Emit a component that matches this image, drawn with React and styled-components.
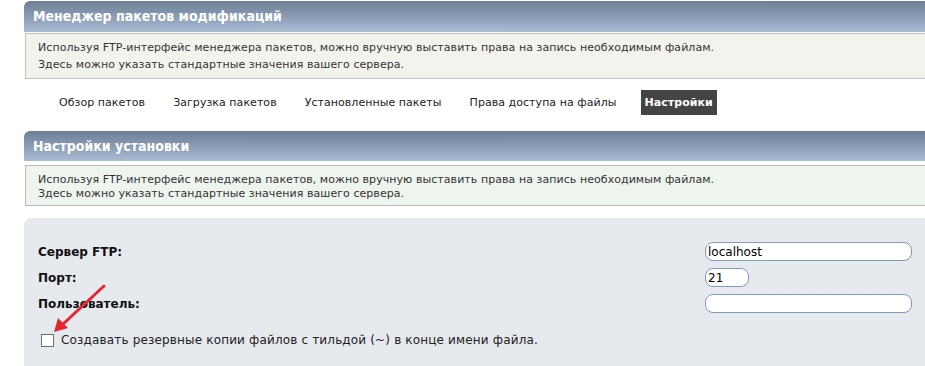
import React from "react";
import styled, { createGlobalStyle } from "styled-components";

const Global = createGlobalStyle`
  html, body { margin: 0; padding: 0; overflow: hidden; background: #fff; }
  body { font-family: "DejaVu Sans", Verdana, sans-serif; color: #222; }
`;

const Page = styled.div`
  position: relative;
  width: 1000px;
  padding: 1px 0 0 24px;
  height: 365px;
  overflow: hidden;
`;

const Header = styled.h2`
  margin: ${(p) => p.$top || 0}px 0 0 0;
  height: ${(p) => p.$h}px;
  line-height: ${(p) => p.$h}px;
  padding: 0 0 0 9px;
  border-radius: 6px 6px 0 0;
  background: linear-gradient(to bottom, #6c7f96 0%, #8a9cb3 50%, #aabdd5 100%);
  color: #fff;
  font-family: "DejaVu Sans Condensed", "DejaVu Sans", Verdana, sans-serif;
  font-size: 14px;
  font-weight: bold;
`;

const InfoBox = styled.div`
  margin: ${(p) => p.$top}px 0 0 1px;
  border: 1px solid ${(p) => p.$border};
  background: ${(p) => p.$bg};
  padding: ${(p) => p.$pad};
  font-size: 11px;
  letter-spacing: 0.06px;
  line-height: ${(p) => p.$lh}px;
  color: #333;
`;

const Tabs = styled.nav`
  display: flex;
  gap: 20px;
  margin: 11px 0 0 31px;
`;

const Tab = styled.span`
  display: block;
  height: 25px;
  line-height: 25px;
  padding: 0 4px;
  font-size: 11px;
  letter-spacing: 0.05px;
  color: ${(p) => (p.$active ? "#fff" : "#222")};
  background: ${(p) => (p.$active ? "#444444" : "transparent")};
  font-weight: ${(p) => (p.$active ? "bold" : "normal")};
`;

const Panel = styled.div`
  margin-top: 12px;
  background: #e6e9ee;
  border-radius: 7px 0 0 0;
  padding: 24px 0 30px 14px;
`;

const FormGrid = styled.div`
  display: grid;
  grid-template-columns: 667px auto;
  row-gap: 7px;
  align-items: center;
`;

const Label = styled.label`
  font-size: 12px;
  font-weight: bold;
  color: #111;
`;

const Input = styled.input`
  box-sizing: border-box;
  width: ${(p) => p.$w}px;
  height: 19px;
  padding: 0 2px;
  border: 1px solid #7f9cba;
  border-radius: 8px;
  background: #fff;
  font-family: "DejaVu Sans", Verdana, sans-serif;
  font-size: 12px;
  color: #000;
  outline: none;
`;

const CheckRow = styled.div`
  display: flex;
  align-items: center;
  gap: 7px;
  margin: 20px 0 0 3px;
  font-size: 12px;
  letter-spacing: 0.16px;
  color: #222;
`;

const Box = styled.span`
  display: block;
  box-sizing: border-box;
  width: 13px;
  height: 13px;
  border: 1px solid #707070;
  background: #fff;
`;

const ArrowSvg = styled.svg`
  position: absolute;
  left: 0;
  top: 0;
  pointer-events: none;
`;

const intro = [
  "Используя FTP-интерфейс менеджера пакетов, можно вручную выставить права на запись необходимым файлам.",
  "Здесь можно указать стандартные значения вашего сервера.",
];

export default function App() {
  return (
    <>
      <Global />
      <Page>
        <Header $h={31}>Менеджер пакетов модификаций</Header>
        <InfoBox $top={1} $border="#c0c0c0" $bg="#f3f3ed" $pad="5px 12px" $lh={17}>
          {intro.map((t) => (
            <div key={t}>{t}</div>
          ))}
        </InfoBox>
        <Tabs>
          <Tab>Обзор пакетов</Tab>
          <Tab>Загрузка пакетов</Tab>
          <Tab>Установленные пакеты</Tab>
          <Tab>Права доступа на файлы</Tab>
          <Tab $active>Настройки</Tab>
        </Tabs>
        <Header $h={30} $top={16}>Настройки установки</Header>
        <InfoBox $top={4} $border="#bcbcbc" $bg="#eef5ee" $pad="7px 12px 4px" $lh={14}>
          {intro.map((t) => (
            <div key={t}>{t}</div>
          ))}
        </InfoBox>
        <Panel>
          <FormGrid>
            <Label>Сервер FTP:</Label>
            <Input $w={207} defaultValue="localhost" />
            <Label>Порт:</Label>
            <Input $w={44} defaultValue="21" />
            <Label>Пользователь:</Label>
            <Input $w={207} defaultValue="" />
          </FormGrid>
          <CheckRow>
            <Box />
            <span>Создавать резервные копии файлов с тильдой (~) в конце имени файла.</span>
          </CheckRow>
        </Panel>
        <ArrowSvg width="200" height="366" viewBox="0 0 200 366">
          <line x1="104" y1="286" x2="62" y2="325" stroke="#e5262b" strokeWidth="3" strokeLinecap="round" />
          <polygon points="54,332 58,318 68,328" fill="#e5262b" />
        </ArrowSvg>
      </Page>
    </>
  );
}
